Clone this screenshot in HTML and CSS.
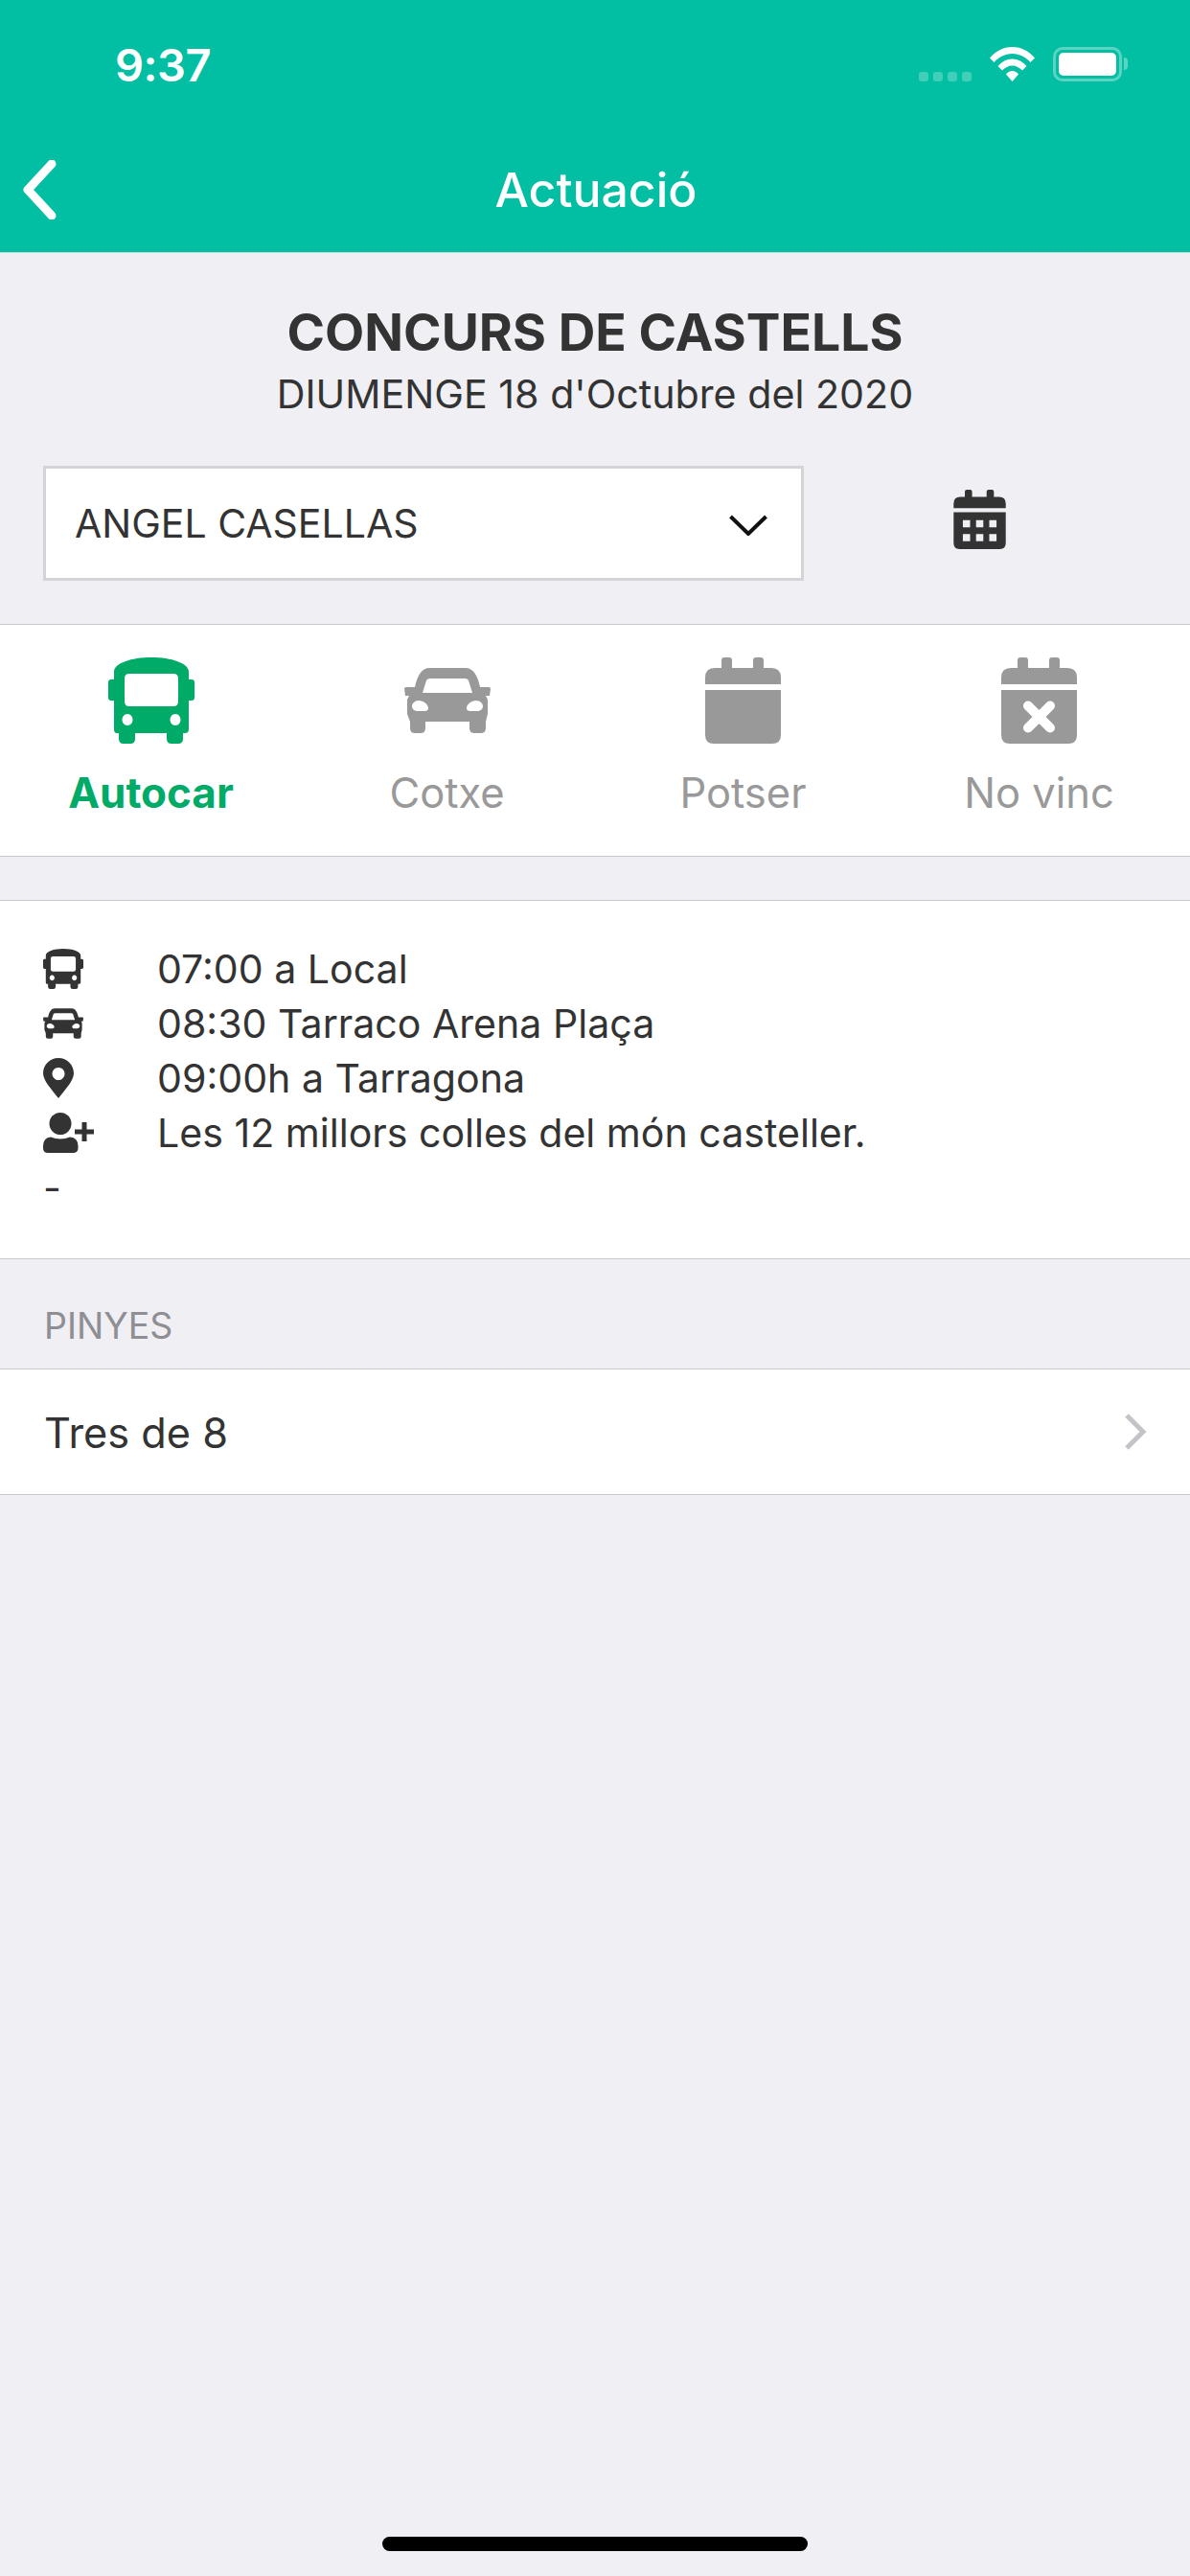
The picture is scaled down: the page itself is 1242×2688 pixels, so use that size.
FILE: index.html
```html
<!DOCTYPE html>
<html lang="ca">
<head>
  <meta charset="UTF-8">
  <meta name="viewport" content="width=device-width, initial-scale=1.0">
  <title>Actuació</title>
  <link rel="stylesheet" href="styles.css">
</head>
<body>
  <!-- shared icon shapes -->
  <svg class="icon-defs" aria-hidden="true">
    <symbol id="i-bus" viewBox="0 0 90 90">
      <path fill-rule="evenodd" d="M6 15C6 6 24 0 45 0s39 6 39 15v8h3q3 0 3 3v16q0 3-3 3h-3v30q0 4-4 4h-2v6q0 5-5 5h-7q-5 0-5-5v-6H28v6q0 5-5 5h-7q-5 0-5-5v-6H9q-3 0-3-4V45H3q-3 0-3-3V26q0-3 3-3h3zM22 17q-5 0-5 5v24q0 5 5 5h46q5 0 5-5V22q0-5-5-5zM20 59a5.500 6 0 1 0 .01 0zM70 59a5.500 6 0 1 0 .01 0z"/>
    </symbol>
    <symbol id="i-car" viewBox="0 0 90 68">
      <path fill-rule="evenodd" d="M26 0H64C71 0 76 6 79 20H88Q90 20 90 22L89 29H85L87 33V48L85 56V63Q85 68 80 68H73Q68 68 68 63V56H22V63Q22 68 17 68H11Q6 68 6 63V56L3 48V33L5 29H1L0 22Q0 20 2 20H11C14 6 19 0 26 0ZM27 11Q24 11 23 13L19 26H71L67 13Q66 11 63 11ZM15 34C11 34 8 37 8 40S11 45 14 45H21Q25 45 25 42C25 38 20 34 15 34ZM75 34C70 34 65 38 65 42Q65 45 69 45H76C79 45 82 43 82 40S79 34 75 34Z"/>
    </symbol>
    <symbol id="i-cal" viewBox="0 0 79 90">
      <path d="M17 11V3q0-3 3-3h5q3 0 3 3v8h22V3q0-3 3-3h5q3 0 3 3v8h8q10 0 10 10v7H0v-7q0-10 10-10zM0 34h79v47q0 9-9 9H9q-9 0-9-9z"/>
    </symbol>
    <symbol id="i-cal-grid" viewBox="0 0 79 90">
      <path fill-rule="evenodd" d="M17 11V3q0-3 3-3h5q3 0 3 3v8h22V3q0-3 3-3h5q3 0 3 3v8h8q10 0 10 10v7H0v-7q0-10 10-10zM0 34h79v47q0 9-9 9H9q-9 0-9-9zM14 46v11h11V46zM34 46v11h11V46zM54 46v11h11V46zM14 67v11h11V67zM34 67v11h11V67zM54 67v11h11V67z"/>
    </symbol>
  </svg>

  <header class="topbar">
    <div class="status-bar">
      <span class="status-time">9:37</span>
      <div class="status-icons">
        <div class="signal"><i></i><i></i><i></i><i></i></div>
        <svg class="wifi" viewBox="0 0 47 36">
          <path d="M0 11.500C6 4.500 14 0 23.500 0S41 4.500 47 11.500L42.500 16C37.500 10.500 31 7 23.500 7S9.500 10.500 4.500 16z"/>
          <path d="M8.500 20C12.500 15.500 17.500 12.500 23.500 12.500S34.500 15.500 38.500 20L34 24.500C31 21.500 27.500 19.500 23.500 19.500S16 21.500 13 24.500z"/>
          <path d="M17 28.500C18.500 26.500 21 25 23.500 25S28.500 26.500 30 28.500L23.500 36z"/>
        </svg>
        <div class="battery"><div class="battery-fill"></div></div>
      </div>
    </div>
    <nav class="navbar">
      <svg class="back-icon" viewBox="0 0 36 62"><path d="M31 4 6 31l25 27"/></svg>
      <h2 class="nav-title">Actuació</h2>
    </nav>
  </header>

  <main>
    <section class="event-head">
      <h1 class="event-title">CONCURS DE CASTELLS</h1>
      <p class="event-date">DIUMENGE 18 d'Octubre del 2020</p>
    </section>

    <div class="picker-row">
      <div class="picker">
        <span>ANGEL CASELLAS</span>
        <svg class="picker-arrow" viewBox="0 0 40 22"><path d="M1.500 2 20 20 38.500 2"/></svg>
      </div>
      <svg class="picker-cal"><use href="#i-cal-grid"/></svg>
    </div>

    <section class="tabs">
      <div class="tab tab-active">
        <div class="tab-icon"><svg class="icon-bus"><use href="#i-bus"/></svg></div>
        <span>Autocar</span>
      </div>
      <div class="tab">
        <div class="tab-icon"><svg class="icon-car"><use href="#i-car"/></svg></div>
        <span>Cotxe</span>
      </div>
      <div class="tab">
        <div class="tab-icon"><svg class="icon-cal"><use href="#i-cal"/></svg></div>
        <span>Potser</span>
      </div>
      <div class="tab">
        <div class="tab-icon">
          <svg class="icon-cal" viewBox="0 0 79 90">
            <use href="#i-cal"/>
            <path class="cross" d="M28 50.500 51 73.500M51 50.500 28 73.500"/>
          </svg>
        </div>
        <span>No vinc</span>
      </div>
    </section>

    <section class="info">
      <div class="info-row">
        <div class="info-icon"><svg class="small-bus"><use href="#i-bus"/></svg></div>
        <span>07:00 a Local</span>
      </div>
      <div class="info-row">
        <div class="info-icon"><svg class="small-car"><use href="#i-car"/></svg></div>
        <span>08:30 Tarraco Arena Plaça</span>
      </div>
      <div class="info-row">
        <div class="info-icon">
          <svg class="small-pin" viewBox="0 0 32 42"><path fill-rule="evenodd" d="M16 0C7 0 0 7 0 16C0 24 10 34 16 42C22 34 32 24 32 16C32 7 25 0 16 0ZM16 10a6.500 6.500 0 1 0 .01 0Z"/></svg>
        </div>
        <span>09:00h a Tarragona</span>
      </div>
      <div class="info-row">
        <div class="info-icon">
          <svg class="small-user" viewBox="0 0 53 42"><circle cx="18" cy="11.500" r="11.500"/><path d="M8 25.500Q18 29.500 28 25.500Q36.500 26 36.500 35V37Q36.500 42 31 42H5Q0 42 0 37V35Q0 26 8 25.500Z"/><path d="M40.500 10h5v7.500H53v5h-7.500V30h-5v-7.500H33v-5h7.500z"/></svg>
        </div>
        <span>Les 12 millors colles del món casteller.</span>
      </div>
      <div class="info-row">-</div>
    </section>

    <h3 class="section-label">PINYES</h3>
    <div class="list-row">
      <span>Tres de 8</span>
      <svg class="row-arrow" viewBox="0 0 24 40"><path d="M3 3l17 17L3 37"/></svg>
    </div>
  </main>

  <div class="home-indicator"></div>
</body>
</html>
```

FILE: styles.css
```css
body {
  font-family: Inter, 'Noto Sans', sans-serif;
  background: #efeff4;
  color: #333;
  margin: 0;
  padding: 0;
  width: 1242px;
  min-height: 2688px;
  position: relative;
  overflow: hidden;
}
.icon-defs {
  display: none;
}

/* header */
.topbar {
  background: #02bfa3;
  color: #fff;
  border-bottom: 1px solid #b9dcd6;
}
.status-bar {
  height: 134px;
  display: flex;
  align-items: center;
  justify-content: space-between;
  padding: 0 71px 0 120px;
}
.status-time {
  font-size: 47px;
  font-weight: 600;
  letter-spacing: -0.5px;
}
.status-icons {
  display: flex;
  align-items: center;
}
.signal {
  display: flex;
  gap: 5px;
  margin: 26px 19px 0 0;
}
.signal i {
  width: 10px;
  height: 10px;
  border-radius: 3px;
  background: rgba(255, 255, 255, 0.25);
}
.wifi {
  width: 47px;
  height: 36px;
  fill: #fff;
  margin-right: 19px;
}
.battery {
  width: 72px;
  height: 36px;
  box-sizing: border-box;
  border: 3px solid rgba(255, 255, 255, 0.35);
  border-radius: 10px;
  padding: 3px;
  position: relative;
}
.battery::after {
  content: "";
  position: absolute;
  right: -9px;
  top: 8px;
  width: 4px;
  height: 13px;
  background: rgba(255, 255, 255, 0.35);
  border-radius: 0 4px 4px 0;
}
.battery-fill {
  height: 100%;
  background: #fff;
  border-radius: 5px;
}
.navbar {
  height: 129px;
  display: flex;
  align-items: center;
  justify-content: center;
  position: relative;
}
.back-icon {
  position: absolute;
  left: 23px;
  top: 33px;
  width: 36px;
  height: 62px;
  fill: none;
  stroke: #fff;
  stroke-width: 9;
  stroke-linecap: round;
  stroke-linejoin: round;
}
.nav-title {
  margin: 0 0 2px;
  padding-left: 2px;
  font-size: 50px;
  line-height: 60px;
  font-weight: 500;
}

/* title block */
.event-head {
  text-align: center;
  padding-top: 53px;
}
.event-title {
  margin: 0;
  font-size: 53.500px;
  line-height: 60px;
  font-weight: 700;
}
.event-date {
  margin: 9px 0 0;
  font-size: 41.200px;
  line-height: 50px;
}

.picker-row {
  display: flex;
  padding: 50px 0 45px 45px;
}
.picker {
  width: 794px;
  height: 120px;
  box-sizing: border-box;
  background: #fff;
  border: 3px solid #d4d4d8;
  display: flex;
  align-items: center;
  justify-content: space-between;
  padding: 0 35px 0 30px;
  font-size: 41px;
}
.picker-arrow {
  width: 40px;
  height: 22px;
  margin-top: 4px;
  fill: none;
  stroke: #111;
  stroke-width: 4;
}
.picker-cal {
  width: 55px;
  height: 62px;
  margin: 25px 0 0 156px;
  fill: #333;
}

/* transport tabs */
.tabs {
  display: grid;
  grid-template-columns: repeat(4, 309px);
  padding: 34px 3px 0;
  height: 207px;
  background: #fff;
  border-top: 1px solid #c8c7cc;
  border-bottom: 1px solid #c8c7cc;
}
.tab {
  display: flex;
  flex-direction: column;
  align-items: center;
  color: #999;
  font-size: 43.500px;
  line-height: 50px;
}
.tab-active {
  color: #00ab68;
  font-weight: 700;
  font-size: 44px;
}
.tab-icon {
  height: 90px;
  margin-bottom: 26px;
  display: flex;
  align-items: center;
}
.tab-icon svg {
  fill: currentColor;
}
.icon-bus {
  width: 90px;
  height: 90px;
}
.icon-car {
  width: 90px;
  height: 68px;
}
.icon-cal {
  width: 79px;
  height: 90px;
}
.cross {
  fill: none;
  stroke: #fff;
  stroke-width: 10;
  stroke-linecap: round;
}

/* details */
.info {
  margin-top: 45px;
  padding: 42px 0 46px 45px;
  background: #fff;
  border-top: 1px solid #c8c7cc;
  border-bottom: 1px solid #c8c7cc;
  font-size: 41.100px;
}
.info-row {
  display: flex;
  align-items: center;
  height: 57px;
}
.info-icon {
  width: 119px;
  flex-shrink: 0;
  display: flex;
  align-items: center;
}
.info-icon svg {
  fill: #333;
  display: block;
}
.small-bus {
  width: 42px;
  height: 42px;
}
.small-car {
  width: 42px;
  height: 32px;
}
.small-pin {
  width: 32px;
  height: 42px;
}
.small-user {
  width: 53px;
  height: 42px;
}

/* pinyes */
.section-label {
  margin: 0;
  padding: 50px 46px 24px;
  font-size: 37.500px;
  line-height: 40px;
  font-weight: 400;
  color: #8e8e93;
}
.list-row {
  height: 130px;
  display: flex;
  align-items: center;
  justify-content: space-between;
  padding: 0 45px 0 46px;
  background: #fff;
  border-top: 1px solid #c8c7cc;
  border-bottom: 1px solid #c8c7cc;
  font-size: 43.300px;
}
.list-row span {
  padding-top: 2px;
}
.row-arrow {
  width: 24px;
  height: 40px;
  fill: none;
  stroke: #c4c4c8;
  stroke-width: 5;
}

.home-indicator {
  position: absolute;
  left: 399px;
  bottom: 26px;
  width: 444px;
  height: 15px;
  background: #000;
  border-radius: 8px;
}
```
